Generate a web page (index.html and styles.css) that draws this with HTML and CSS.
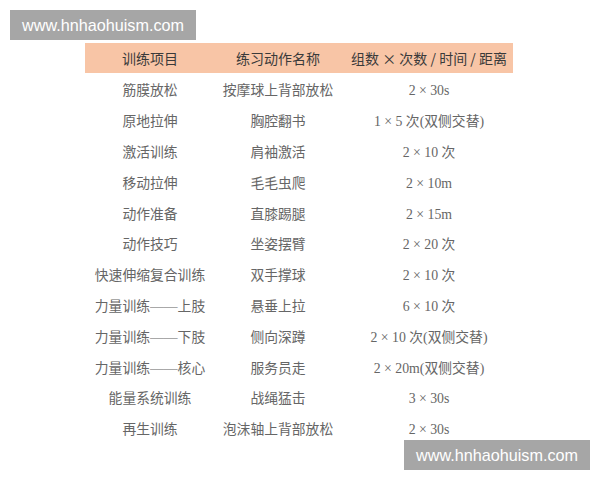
FILE: index.html
```html
<!DOCTYPE html>
<html lang="zh-CN">
<head>
<meta charset="utf-8">
<title>训练计划</title>
<link rel="stylesheet" href="styles.css">
</head>
<body>
<div class="page">
  <div class="table">
    <div class="head">
      <div class="c1">训练项目</div>
      <div class="c2">练习动作名称</div>
      <div class="c3">组数 × 次数 / 时间 / 距离</div>
    </div>
    <div class="rows">
      <div class="row"><div class="c1">筋膜放松</div><div class="c2">按摩球上背部放松</div><div class="c3">2 × 30s</div></div>
      <div class="row"><div class="c1">原地拉伸</div><div class="c2">胸腔翻书</div><div class="c3">1 × 5 次(双侧交替)</div></div>
      <div class="row"><div class="c1">激活训练</div><div class="c2">肩袖激活</div><div class="c3">2 × 10 次</div></div>
      <div class="row"><div class="c1">移动拉伸</div><div class="c2">毛毛虫爬</div><div class="c3">2 × 10m</div></div>
      <div class="row"><div class="c1">动作准备</div><div class="c2">直膝踢腿</div><div class="c3">2 × 15m</div></div>
      <div class="row"><div class="c1">动作技巧</div><div class="c2">坐姿摆臂</div><div class="c3">2 × 20 次</div></div>
      <div class="row"><div class="c1">快速伸缩复合训练</div><div class="c2">双手撑球</div><div class="c3">2 × 10 次</div></div>
      <div class="row"><div class="c1">力量训练——上肢</div><div class="c2">悬垂上拉</div><div class="c3">6 × 10 次</div></div>
      <div class="row"><div class="c1">力量训练——下肢</div><div class="c2">侧向深蹲</div><div class="c3">2 × 10 次(双侧交替)</div></div>
      <div class="row"><div class="c1">力量训练——核心</div><div class="c2">服务员走</div><div class="c3">2 × 20m(双侧交替)</div></div>
      <div class="row"><div class="c1">能量系统训练</div><div class="c2">战绳猛击</div><div class="c3">3 × 30s</div></div>
      <div class="row"><div class="c1">再生训练</div><div class="c2">泡沫轴上背部放松</div><div class="c3">2 × 30s</div></div>
    </div>
  </div>
</div>
<div class="mark mark-top">www.hnhaohuism.com</div>
<div class="mark mark-bottom">www.hnhaohuism.com</div>
</body>
</html>
```

FILE: styles.css
```css
html, body {
  margin: 0;
  padding: 0;
  background: #ffffff;
}

body {
  width: 600px;
  height: 480px;
  position: relative;
  overflow: hidden;
}

.page {
  padding: 43px 0 0 85px;
}

.table {
  width: 428px;
}

.head,
.row {
  display: grid;
  grid-template-columns: 130px 126px 1fr;
  align-items: center;
  text-align: center;
  white-space: nowrap;
}

.head {
  height: 30px;
  background: #f8c5a6;
  color: #3a3a3a;
  font-family: "Noto Sans CJK SC", "Noto Sans", sans-serif;
  font-size: 14px;
}

.rows {
  padding-top: 3px;
}

.row {
  height: 30.8px;
  color: #666666;
  font-family: "Liberation Serif", "Noto Sans CJK SC", serif;
  font-size: 13.8px;
  line-height: 18px;
}

.c3 {
  padding-left: 4px;
}

.mark {
  position: absolute;
  background: #a6a6a6;
  color: #ffffff;
  font-family: "Liberation Sans", Arial, sans-serif;
  font-size: 16.2px;
  line-height: 30px;
  text-align: center;
}

.mark-top {
  left: 10px;
  top: 10px;
  width: 186px;
}

.mark-bottom {
  left: 404px;
  top: 440px;
  width: 186px;
}
```
